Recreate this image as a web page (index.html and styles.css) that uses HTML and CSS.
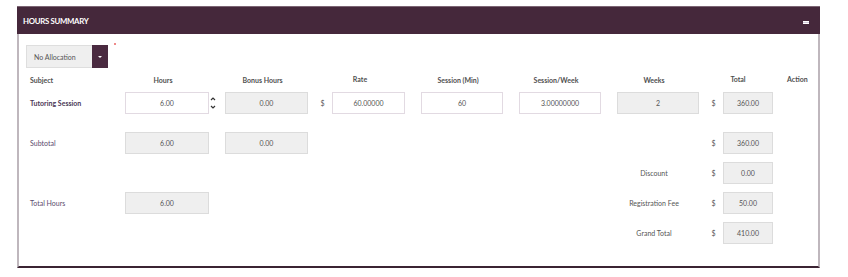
FILE: index.html
```html
<!DOCTYPE html>
<html lang="en">
<head>
<meta charset="utf-8">
<title>Hours Summary</title>
<link rel="stylesheet" href="styles.css">
</head>
<body>
<div class="panel">
  <div class="panel-head">
    <span class="title">HOURS SUMMARY</span>
    <span class="collapse"></span>
  </div>
  <div class="panel-body">
    <div class="alloc-row">
      <div class="select">
        <span class="select-text">No Allocation</span>
        <span class="select-btn"><span class="caret"></span></span>
      </div>
      <span class="req"></span>
    </div>
    <div class="grid">
      <div class="hd r1 c1 left">Subject</div>
      <div class="hd r1 c2">Hours</div>
      <div class="hd r1 c4">Bonus Hours</div>
      <div class="hd r1 c56 rate-hd">Rate</div>
      <div class="hd r1 c8">Session (Min)</div>
      <div class="hd r1 c10">Session/Week</div>
      <div class="hd r1 c12">Weeks</div>
      <div class="hd r1 c1314 total-hd">Total</div>
      <div class="hd r1 c15 action-hd">Action</div>

      <div class="subject r2 c1">Tutoring Session</div>
      <div class="box edit r2 c2">6.00</div>
      <div class="spin r2 c3">
        <svg width="6" height="14" viewBox="0 0 6 14"><path d="M1 4 L3 2 L5 4" fill="none" stroke="#333" stroke-width="1.2"/><path d="M1 10 L3 12 L5 10" fill="none" stroke="#333" stroke-width="1.2"/></svg>
      </div>
      <div class="box r2 c4">0.00</div>
      <div class="dollar r2 c5">$</div>
      <div class="box edit r2 c6">60.00000</div>
      <div class="box edit r2 c8">60</div>
      <div class="box edit r2 c10">3.00000000</div>
      <div class="box r2 c12">2</div>
      <div class="dollar r2 c13">$</div>
      <div class="box r2 c14">360.00</div>

      <div class="lbl r4 c1">Subtotal</div>
      <div class="box r4 c2">6.00</div>
      <div class="box r4 c4">0.00</div>
      <div class="dollar r4 c13">$</div>
      <div class="box r4 c14">360.00</div>

      <div class="rlbl r5 c12">Discount</div>
      <div class="dollar r5 c13">$</div>
      <div class="box r5 c14">0.00</div>

      <div class="lbl r6 c1">Total Hours</div>
      <div class="box r6 c2">6.00</div>
      <div class="rlbl r6 c12">Registration Fee</div>
      <div class="dollar r6 c13">$</div>
      <div class="box r6 c14">50.00</div>

      <div class="rlbl r7 c12">Grand Total</div>
      <div class="dollar r7 c13">$</div>
      <div class="box r7 c14">410.00</div>
    </div>
  </div>
</div>
</body>
</html>
```

FILE: styles.css
```css
html, body {
  margin: 0;
  padding: 0;
  background: #ffffff;
}

body {
  font-family: Lato, "Open Sans", "Liberation Sans", sans-serif;
  font-size: 7px;
  color: #444;
}

.panel {
  margin: 6px 0 0 17px;
  width: 803px;
}

.panel-head {
  height: 28px;
  background: #45283b;
  border-top: 1px solid #7c6574;
  box-sizing: border-box;
  display: flex;
  align-items: center;
  justify-content: space-between;
  padding: 0 11px 0 6px;
}

.title {
  color: #ffffff;
  font-weight: 700;
  font-size: 7.8px;
  letter-spacing: -0.3px;
}

.collapse {
  display: block;
  width: 6px;
  height: 1px;
  background: #cfc6d8;
  border-top: 1px solid #ffffff;
  border-bottom: 1px solid #ffffff;
  margin-top: 3px;
}

.panel-body {
  border-left: 2px solid #bfb7bd;
  border-right: 2px solid #bfb7bd;
  border-bottom: 2px solid #3b2433;
  padding: 11px 0 22px 7px;
}

.alloc-row {
  display: flex;
  align-items: flex-start;
}

.select {
  display: flex;
  width: 82px;
  height: 23px;
  box-sizing: border-box;
}

.select-text {
  flex: 1;
  background: #efefef;
  border: 1px solid #dedede;
  border-right: none;
  display: flex;
  align-items: center;
  padding-left: 7px;
  color: #555;
}

.select-btn {
  width: 16px;
  background: #4a2a40;
  display: flex;
  align-items: center;
  justify-content: center;
}

.caret {
  width: 0;
  height: 0;
  border-left: 2px solid transparent;
  border-right: 2px solid transparent;
  border-top: 2px solid #ffffff;
}

.req {
  display: block;
  width: 2px;
  height: 2px;
  background: #ef8a8a;
  margin: -2px 0 0 6px;
}

.grid {
  display: grid;
  margin: 6px 0 0 4px;
  grid-template-columns: 95px 84px 16px 83px 24px 73px 16px 82px 16px 82px 16px 82px 24px 50px 40px;
  grid-template-rows: 10px 22px 2px 22px 22px 22px 22px;
  row-gap: 8px;
  align-items: center;
}

.r1 { grid-row: 1; padding-top: 2px; }
.r2 { grid-row: 2; }
.r4 { grid-row: 4; }
.r5 { grid-row: 5; }
.r6 { grid-row: 6; }
.r7 { grid-row: 7; }

.c1 { grid-column: 1; }
.c2 { grid-column: 2; }
.c3 { grid-column: 3; }
.c4 { grid-column: 4; }
.c5 { grid-column: 5; }
.c6 { grid-column: 6; }
.c56 { grid-column: 5 / 7; }
.c8 { grid-column: 8; }
.c10 { grid-column: 10; }
.c12 { grid-column: 12; }
.c13 { grid-column: 13; }
.c14 { grid-column: 14; }
.c1314 { grid-column: 13 / 15; }
.c15 { grid-column: 15; }

.hd {
  font-weight: 700;
  color: #505050;
  text-align: center;
  padding-right: 8px;
  white-space: nowrap;
}

.hd.left {
  text-align: left;
  padding-right: 0;
}

.rate-hd {
  padding: 0 0 0 7px;
}

.total-hd {
  padding: 0 0 0 4px;
}

.action-hd {
  text-align: left;
  padding: 0 0 0 14px;
}

.subject {
  font-weight: 700;
  color: #4b3856;
}

.lbl {
  color: #5a4a6c;
}

.rlbl {
  color: #555;
  text-align: center;
  padding-right: 8px;
  white-space: nowrap;
}

.box {
  height: 22px;
  box-sizing: border-box;
  background: #efefef;
  border: 1px solid #dcdcdc;
  display: flex;
  align-items: center;
  justify-content: center;
  color: #555;
}

.box.edit {
  background: #ffffff;
  border-color: #e2dae2;
}

.spin {
  display: flex;
  padding-left: 1px;
}

.dollar {
  text-align: center;
  padding-left: 5px;
  color: #555;
}
```
